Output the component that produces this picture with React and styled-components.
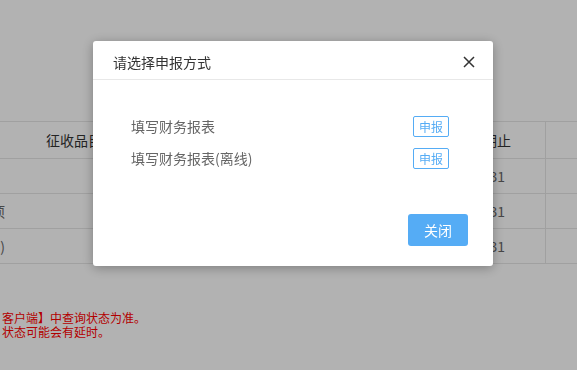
import styled, { createGlobalStyle } from "styled-components";

const GlobalStyle = createGlobalStyle`
  html, body {
    margin: 0;
    padding: 0;
    background: #fff;
    font-family: "Microsoft YaHei", "Noto Sans CJK SC", "Noto Sans", sans-serif;
  }
`;

const Page = styled.div`
  width: 100%;
  height: 370px;
  overflow: hidden;
  padding-top: 121px;
  box-sizing: border-box;
  background: #fff;
`;

const Table = styled.div`
  display: grid;
  grid-template-columns: 5px 138px 250px 153px 1fr;
  border-top: 1px solid #e6e6e6;
  font-size: 14px;
`;

const Cell = styled.div`
  height: ${({ head }) => (head ? "36px" : "34px")};
  border-bottom: 1px solid #e6e6e6;
  border-right: ${({ noLine }) => (noLine ? "none" : "1px solid #e6e6e6")};
  display: flex;
  align-items: center;
  justify-content: ${({ tail }) => (tail ? "flex-end" : "center")};
  overflow: hidden;
  white-space: nowrap;
  color: ${({ head }) => (head ? "#333" : "#666")};
`;

const Notes = styled.div`
  margin-top: 47px;
  padding-left: 2px;
  font-size: 12px;
  line-height: 14px;
  color: #ff0000;
`;

const Overlay = styled.div`
  position: fixed;
  inset: 0;
  background: rgba(0, 0, 0, 0.3);
  display: flex;
  align-items: flex-start;
  padding: 41px 0 0 93px;
`;

const Modal = styled.div`
  width: 400px;
  background: #fff;
  border-radius: 3px;
  box-shadow: 0 2px 12px rgba(0, 0, 0, 0.3);
`;

const Header = styled.div`
  height: 39px;
  box-sizing: border-box;
  padding: 3px 18px 0 20px;
  border-bottom: 1px solid #e8e8e8;
  display: flex;
  align-items: center;
  justify-content: space-between;
`;

const Title = styled.span`
  font-size: 14px;
  color: #333;
`;

const CloseIcon = styled.svg`
  width: 12px;
  height: 12px;
  display: block;
`;

const Body = styled.div`
  padding: 30px 44px 0 38px;
`;

const Row = styled.div`
  height: 32px;
  display: flex;
  align-items: center;
  justify-content: space-between;
`;

const Label = styled.span`
  font-size: 14px;
  color: #666;
`;

const ReportButton = styled.button`
  height: 21px;
  padding: 0 5px;
  border: 1px solid #55acf5;
  border-radius: 2px;
  background: #fff;
  color: #55acf5;
  font-family: inherit;
  font-size: 12px;
  line-height: 19px;
`;

const Footer = styled.div`
  padding: 40px 25px 20px;
  display: flex;
  justify-content: flex-end;
`;

const CloseButton = styled.button`
  width: 60px;
  height: 32px;
  border: none;
  border-radius: 3px;
  background: #55acf5;
  color: #fff;
  font-family: inherit;
  font-size: 14px;
`;

// first column is scrolled out of view; only the tail of the text shows
const rows = [
  ["", "2024-03-31"],
  ["增值税及附加税费申报事项", "2024-03-31"],
  ["企业所得税月(季)度预缴申报)", "2024-03-31"],
];

const options = ["填写财务报表", "填写财务报表(离线)"];

function App() {
  return (
    <>
      <GlobalStyle />
      <Page>
        <Table>
          <Cell head tail noLine></Cell>
          <Cell head noLine>征收品目</Cell>
          <Cell head>申报期限</Cell>
          <Cell head>税款所属期止</Cell>
          <Cell head noLine></Cell>
          {rows.map((r, i) => (
            <>
              <Cell key={`a${i}`} tail noLine>{r[0]}</Cell>
              <Cell key={`b${i}`} noLine></Cell>
              <Cell key={`c${i}`}></Cell>
              <Cell key={`d${i}`}>{r[1]}</Cell>
              <Cell key={`e${i}`} noLine></Cell>
            </>
          ))}
        </Table>
        <Notes>
          <div>客户端】中查询状态为准。</div>
          <div>状态可能会有延时。</div>
        </Notes>
      </Page>
      <Overlay>
        <Modal>
          <Header>
            <Title>请选择申报方式</Title>
            <CloseIcon viewBox="0 0 12 12">
              <path d="M1 1 L11 11 M11 1 L1 11" stroke="#333" strokeWidth="1.5" />
            </CloseIcon>
          </Header>
          <Body>
            {options.map((o) => (
              <Row key={o}>
                <Label>{o}</Label>
                <ReportButton>申报</ReportButton>
              </Row>
            ))}
          </Body>
          <Footer>
            <CloseButton>关闭</CloseButton>
          </Footer>
        </Modal>
      </Overlay>
    </>
  );
}

export default App;
